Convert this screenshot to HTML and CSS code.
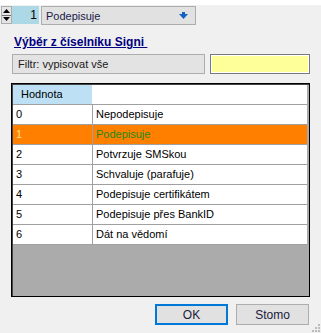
FILE: index.html
```html
<!DOCTYPE html>
<html>
<head>
<meta charset="utf-8">
<link rel="stylesheet" href="styles.css">
</head>
<body>
<div class="topstrip"></div>
<div class="dialog">
  <div class="toprow">
    <div class="spin">
      <div class="spin-btn"><svg width="7" height="4" viewBox="0 0 7 4"><path d="M0 4 L3.5 0 L7 4Z" fill="#000"/></svg></div>
      <div class="spin-btn"><svg width="7" height="4" viewBox="0 0 7 4"><path d="M0 0 L3.5 4 L7 0Z" fill="#000"/></svg></div>
    </div>
    <div class="numbox">1</div>
    <div class="combo">
      <span class="combo-text">Podepisuje</span>
      <svg class="combo-arrow" width="9" height="7" viewBox="0 0 9 7"><path d="M0 2 H9 L4.5 7Z" fill="#1560C0"/><rect x="3" y="0" width="3" height="3" fill="#1560C0"/></svg>
    </div>
  </div>
  <div class="title">Výběr z číselníku Signi&nbsp;</div>
  <div class="filterrow">
    <div class="filter">Filtr: vypisovat vše</div>
    <div class="yellow"></div>
  </div>
  <div class="grid">
    <div class="row header"><div class="c1 hcell">Hodnota</div><div class="c2 hblank"></div></div>
    <div class="row"><div class="c1">0</div><div class="c2">Nepodepisuje</div></div>
    <div class="row sel"><div class="c1">1</div><div class="c2">Podepisuje</div></div>
    <div class="row"><div class="c1">2</div><div class="c2">Potvrzuje SMSkou</div></div>
    <div class="row"><div class="c1">3</div><div class="c2">Schvaluje (parafuje)</div></div>
    <div class="row"><div class="c1">4</div><div class="c2">Podepisuje certifikátem</div></div>
    <div class="row"><div class="c1">5</div><div class="c2">Podepisuje přes BankID</div></div>
    <div class="row"><div class="c1">6</div><div class="c2">Dát na vědomí</div></div>
    <div class="empty"></div>
  </div>
  <div class="buttons">
    <div class="btn default">OK</div>
    <div class="btn">Stomo</div>
  </div>
  <svg class="grip" width="8" height="8" viewBox="0 0 8 8">
    <rect x="6" y="0" width="2" height="2" fill="#bbb"/>
    <rect x="3" y="3" width="2" height="2" fill="#bbb"/><rect x="6" y="3" width="2" height="2" fill="#bbb"/>
    <rect x="0" y="6" width="2" height="2" fill="#bbb"/><rect x="3" y="6" width="2" height="2" fill="#bbb"/><rect x="6" y="6" width="2" height="2" fill="#bbb"/>
  </svg>
</div>
</body>
</html>
```
FILE: styles.css
```css
html, body {
  margin: 0;
  padding: 0;
  background: #f0f0f0;
  font-family: "Liberation Sans", Arial, sans-serif;
  font-size: 11px;
  color: #000;
}
.topstrip {
  height: 5px;
  background: #fff;
}
.dialog {
  position: relative;
  height: 328px;
}
.toprow {
  display: flex;
  align-items: flex-start;
  padding: 1px 0 0 1px;
  height: 20px;
}
.spin {
  width: 11px;
  height: 18px;
  display: flex;
  flex-direction: column;
  border: 1px solid #adadad;
  box-sizing: border-box;
  background: #e5e5e5;
}
.spin-btn {
  flex: 1;
  display: flex;
  align-items: center;
  justify-content: center;
}
.spin-btn + .spin-btn {
  border-top: 1px solid #707070;
}
.numbox {
  width: 27px;
  height: 18px;
  background: #add8e6;
  text-align: right;
  box-sizing: border-box;
  padding: 2px 2px 0 0;
  font-size: 12px;
}
.combo {
  margin-left: 2px;
  width: 155px;
  height: 19px;
  box-sizing: border-box;
  border: 1px solid #adadad;
  background: #e1e1e1;
  display: flex;
  align-items: center;
  padding: 0 7px 0 4px;
}
.combo-text {
  flex: 1;
  color: #1a1a4a;
}
.title {
  margin: 9px 0 0 14px;
  height: 16px;
  font-weight: bold;
  font-size: 12px;
  color: #000080;
  text-decoration: underline;
}
.filterrow {
  display: flex;
  gap: 5px;
  padding-left: 12px;
  margin-top: 3px;
}
.filter {
  width: 193px;
  height: 20px;
  box-sizing: border-box;
  border: 1px solid #adadad;
  background: #e3e3e3;
  padding: 3px 0 0 5px;
  color: #202020;
}
.yellow {
  width: 100px;
  height: 20px;
  box-sizing: border-box;
  border: 1px solid #7a7a7a;
  box-shadow: inset 0 0 0 1px #fff;
  background: #ffff99;
}
.grid {
  margin: 9px 0 0 11px;
  width: 299px;
  height: 214px;
  box-sizing: border-box;
  border: 1px solid #000;
  box-shadow: inset 1px 1px 0 #444;
  background: #ababab;
  display: flex;
  flex-direction: column;
  padding: 1px 1px 1px 1px;
}
.row {
  display: flex;
  height: 20px;
  background: #fff;
  border-bottom: 1px solid #a0a0a0;
  box-sizing: border-box;
  margin-right: 1px;
}
.row .c1 {
  width: 80px;
  border-right: 1px solid #a0a0a0;
  box-sizing: border-box;
  padding: 3px 0 0 3px;
}
.row .c2 {
  flex: 1;
  padding: 3px 0 0 3px;
}
.header {
  border-bottom: 1px solid #a0a0a0;
}
.header .hcell {
  background: #bde0f5;
  padding-left: 8px;
  border-right: 1px solid #fff;
}
.header .hblank {
  background: #fff;
}
.row.sel {
  background: #ff8000;
}
.row.sel .c1 {
  color: #ffe08a;
}
.row.sel .c2 {
  color: #1a8a1a;
}
.empty {
  flex: 1;
}
.buttons {
  display: flex;
  gap: 8px;
  justify-content: flex-end;
  margin: 7px 12px 0 0;
}
.btn {
  width: 73px;
  height: 21px;
  box-sizing: border-box;
  border: 1px solid #adadad;
  background: #e1e1e1;
  display: flex;
  align-items: center;
  justify-content: center;
  font-size: 12px;
  color: #1a1a3a;
}
.btn.default {
  border: 2px solid #0078d7;
}
.grip {
  position: absolute;
  right: 1px;
  bottom: 1px;
}
```
